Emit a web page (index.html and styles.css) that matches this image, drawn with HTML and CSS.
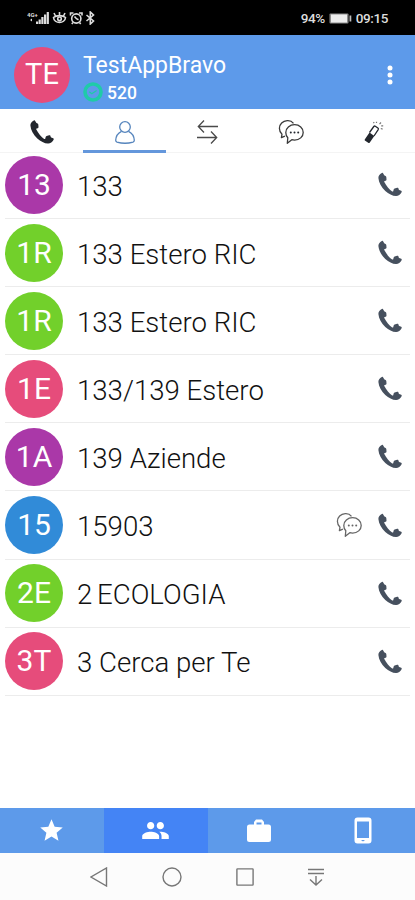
FILE: index.html
```html
<!DOCTYPE html>
<html lang="en">
<head>
  <meta charset="UTF-8" />
  <meta name="viewport" content="width=device-width, initial-scale=1.0"/>
  <title>Contacts</title>
  <link rel="stylesheet" href="styles.css">
</head>
<body>

  <!-- shared icons -->
  <svg class="sprite" width="0" height="0">
    <symbol id="phone" viewBox="0 0 24 24">
      <path d="M3.800.5C1.500 1.800.3 3.500.4 5.600c.4 4.600 2.900 9.200 6.900 12.800 3.300 3 7.200 4.900 10.600 5.200 2.300.1 4.600-1.500 5.700-3.900.3-.6.1-1.100-.4-1.400l-2-.8c-.4-.2-.6-.5-.6-1-.1-.9-.6-1.400-1.500-1.200l-2.500.7c-.6.2-.9.600-1 1.200l-.3 1.300c-.1.500-.6.7-1.100.4C11.300 17.200 8.300 13.500 6.300 9.600c-.2-.5-.1-.9.400-1l1-.3c.6-.2.9-.6.8-1.200l-.2-2.600c-.1-.7-.5-1.100-1.200-1.200-.5 0-.8-.3-1-.8L5.200.9C4.900.3 4.400.1 3.800.5z"/>
    </symbol>
    <symbol id="chat" viewBox="0 0 26 26">
      <g fill="none" stroke="currentColor" stroke-width="1.300" stroke-linejoin="round">
        <path d="M15.500 4.300C13.900 2.200 11.600 1.400 9.200 1.600 4.800 1.900 1.400 5.200 1.400 9.300c0 2.500 1 4.500 2.600 5.900L3.400 18.600l3.500-1.500"/>
        <path d="M16.600 5.700c4.900 0 8.600 3.400 8.600 7.700s-3.700 7.700-8.600 7.700c-1 0-1.900-.1-2.800-.4L9.300 24.300l.5-5.500C8.500 17.400 7.800 15.500 7.800 13.400c0-4.300 3.900-7.700 8.800-7.700z"/>
      </g>
      <circle cx="12.800" cy="13.500" r="1"/><circle cx="16.500" cy="13.500" r="1"/><circle cx="20.200" cy="13.500" r="1"/>
    </symbol>
  </svg>

  <div class="status">
    <svg class="status-icons" width="68" height="14" viewBox="0 0 68 14">
      <text x="0" y="5.500" class="net">4G+</text>
      <path d="M3 9l2-1.500v3zM9 10.500h2.100v2.500H9zM11.600 8.500h2.200v4.500h-2.200zM14.300 6h2.200v7h-2.200zM17 3.500h2.200V13H17zM19.700 1h2.200v12h-2.200z"/>
      <g fill="none" stroke="currentColor" stroke-width="1.600">
        <path d="M26.500 6.500c3-2.500 9-2.500 12 0-.5 6.500-11.500 6.500-12 0zM27 2l1.500 3M32.500 1v3.500M38 2l-1.500 3"/>
        <circle cx="32.500" cy="7.800" r="1.800"/>
        <circle cx="49.300" cy="7.500" r="4.600"/>
        <path d="M43.500 4.500v-2.500h3M55 4.500v-2.500h-3M47.500 5.500l2 2.200 2 1M46 11.500L44.800 13M52.500 11.500l1.200 1.500"/>
        <path d="M59.500 4l7 6-3.200 3V1l3.200 3-7 6"/>
      </g>
    </svg>
    <div class="status-right">
      <span class="battery-text">94%</span>
      <svg width="23" height="11" viewBox="0 0 23 11">
        <rect x=".5" y=".5" width="19" height="10" rx="1" fill="#8d8d8d"/>
        <rect x="2" y="1.500" width="16" height="8" fill="#ededed"/>
        <path d="M20.500 2.500h1.800v6h-1.800z" fill="#bbb"/>
      </svg>
      <span class="clock">09:15</span>
    </div>
  </div>

  <header class="header">
    <div class="avatar pink">TE</div>
    <div class="account">
      <div class="name">TestAppBravo</div>
      <div class="ext">
        <svg width="20" height="20" viewBox="0 0 20 20" fill="none" stroke="#1fcba8">
          <circle cx="10" cy="10" r="8" stroke-width="3.600"/>
          <path d="M6.200 9.800l2.600 2 4.800-3.300" stroke-width="1.300"/>
        </svg>
        <span>520</span>
      </div>
    </div>
    <svg class="more" width="6" height="20" viewBox="0 0 6 20">
      <circle cx="3" cy="3" r="2.500"/><circle cx="3" cy="10" r="2.500"/><circle cx="3" cy="17" r="2.500"/>
    </svg>
  </header>

  <nav class="tabs">
    <div class="tab"><svg class="dark" width="24" height="24"><use href="#phone"/></svg></div>
    <div class="tab active">
      <svg width="20" height="23" viewBox="0 0 20 23" fill="none" stroke="#5685bd" stroke-width="1.300">
        <circle cx="10" cy="6" r="5.300"/>
        <path d="M6.500 10.300C3 12 .9 15 .7 19.300c0 .9.500 1.500 1.300 1.800 4.800 1.400 11.200 1.400 16 0 .8-.3 1.300-.9 1.300-1.800-.2-4.300-2.300-7.300-5.800-9"/>
      </svg>
    </div>
    <div class="tab">
      <svg width="21" height="24" viewBox="0 0 21 24" fill="none" stroke="#4a4a4a" stroke-width="1.300">
        <path d="M21 6.500H1.500M7 .5L1.300 6.500 7 12.500M0 17.500h19.500M14 11.500l5.700 6L14 23.500"/>
      </svg>
    </div>
    <div class="tab"><svg class="dark" width="26" height="26"><use href="#chat"/></svg></div>
    <div class="tab">
      <svg class="wand" width="20" height="23" viewBox="0 0 20 23">
        <path d="M5.500 11.500L10.300 15l-4.500 6.500c-.4.600-1 .7-1.600.3L1.200 19.800c-.6-.4-.7-1-.3-1.600z" fill="#23272e"/>
        <path d="M5.500 11.500l4.300-6c.4-.5 1-.6 1.500-.3l2.600 1.900c.5.400.6 1 .3 1.500L10 15" fill="none" stroke="#23272e" stroke-width="1.300"/>
        <path d="M9.300 2l1-.7M12.500 2V.8M15.500 3.200l1.500-1.700M17.200 4.800h2M16.800 7.500l1.800.6" stroke="#777" stroke-width="1.200"/>
      </svg>
    </div>
  </nav>

  <main class="contacts">
    <div class="contact">
      <div class="avatar purple">13</div>
      <div class="label">133</div>
      <svg class="call" width="24" height="25"><use href="#phone"/></svg>
    </div>
    <div class="contact">
      <div class="avatar green">1R</div>
      <div class="label">133 Estero RIC</div>
      <svg class="call" width="24" height="25"><use href="#phone"/></svg>
    </div>
    <div class="contact">
      <div class="avatar green">1R</div>
      <div class="label">133 Estero RIC</div>
      <svg class="call" width="24" height="25"><use href="#phone"/></svg>
    </div>
    <div class="contact">
      <div class="avatar pink">1E</div>
      <div class="label">133/139 Estero</div>
      <svg class="call" width="24" height="25"><use href="#phone"/></svg>
    </div>
    <div class="contact">
      <div class="avatar purple">1A</div>
      <div class="label">139 Aziende</div>
      <svg class="call" width="24" height="25"><use href="#phone"/></svg>
    </div>
    <div class="contact">
      <div class="avatar blue">15</div>
      <div class="label">15903</div>
      <svg class="message" width="26" height="26"><use href="#chat"/></svg>
      <svg class="call" width="24" height="25"><use href="#phone"/></svg>
    </div>
    <div class="contact">
      <div class="avatar green">2E</div>
      <div class="label tight">2 ECOLOGIA</div>
      <svg class="call" width="24" height="25"><use href="#phone"/></svg>
    </div>
    <div class="contact">
      <div class="avatar pink">3T</div>
      <div class="label">3 Cerca per Te</div>
      <svg class="call" width="24" height="25"><use href="#phone"/></svg>
    </div>
  </main>

  <nav class="bottom">
    <div class="item">
      <svg width="27" height="27" viewBox="0 0 24 24"><path d="M12 17.270L18.180 21l-1.640-7.030L22 9.240l-7.190-.61L12 2 9.190 8.630 2 9.240l5.460 4.730L5.820 21z"/></svg>
    </div>
    <div class="item active">
      <svg width="29" height="29" viewBox="0 0 24 24"><path d="M16 11c1.660 0 2.990-1.340 2.990-3S17.660 5 16 5s-3 1.340-3 3 1.340 3 3 3zm-8 0c1.660 0 2.990-1.340 2.990-3S9.660 5 8 5 5 6.340 5 8s1.340 3 3 3zm0 2c-2.330 0-7 1.170-7 3.500V19h14v-2.500C15 14.170 10.330 13 8 13zm8 0c-.29 0-.62.020-.97.050 1.160.84 1.970 1.970 1.970 3.450V19h6v-2.500c0-2.330-4.670-3.500-7-3.500z"/></svg>
    </div>
    <div class="item">
      <svg width="26" height="26" viewBox="0 0 26 26"><path d="M3.500 6.500H8V4l2-2.500h6L18 4v2.500h4.500A2.500 2.500 0 0 1 25 9v12.500a2.500 2.500 0 0 1-2.500 2.500h-19A2.500 2.500 0 0 1 1 21.500V9a2.500 2.500 0 0 1 2.500-2.500zM10.500 4.500v2h5v-2z" fill-rule="evenodd"/></svg>
    </div>
    <div class="item">
      <svg width="18" height="27" viewBox="0 0 18 27"><path d="M3.500.5h11a3 3 0 0 1 3 3v20a3 3 0 0 1-3 3h-11a3 3 0 0 1-3-3v-20a3 3 0 0 1 3-3zM3 4.500v16.500h12V4.500zM7 23l1.500 1.300h1L11 23z" fill-rule="evenodd"/></svg>
    </div>
  </nav>

  <footer class="system">
    <svg width="18" height="20" viewBox="0 0 18 20"><path d="M16.500 1v18L1 10z"/></svg>
    <svg width="20" height="20" viewBox="0 0 20 20"><circle cx="10" cy="10" r="9"/></svg>
    <svg width="18" height="18" viewBox="0 0 18 18"><rect x=".9" y=".9" width="16.200" height="16.200" rx=".6"/></svg>
    <svg width="16" height="18" viewBox="0 0 16 18"><path d="M0 1.500h16M0 5.500h16M8 8v9M2 11.500l6 5.500 6-5.500"/></svg>
  </footer>

</body>
</html>
```
FILE: styles.css
```css
* {
  box-sizing: border-box;
}

body {
  margin: 0;
  height: 900px;
  display: flex;
  flex-direction: column;
  font-family: Roboto, 'Liberation Sans', sans-serif;
  background: #fff;
  overflow: hidden;
}

svg {
  display: block;
  flex: none;
}

.sprite {
  position: absolute;
}

.status {
  height: 35px;
  flex: none;
  display: flex;
  justify-content: space-between;
  align-items: center;
  padding: 1px 27px 0;
  background: #000;
  color: #ddd;
}

.status-icons {
  fill: currentColor;
}

.net {
  font-size: 6px;
  font-weight: bold;
}

.status-right {
  display: flex;
  align-items: center;
  gap: 4px;
  font-size: 13.5px;
  font-weight: 500;
}

.status-right span {
  letter-spacing: -0.4px;
}

.header {
  height: 74px;
  flex: none;
  display: flex;
  align-items: center;
  padding: 6px 22px 0 14px;
  background: #5d9aea;
  color: #fff;
}

.avatar {
  width: 58px;
  height: 58px;
  flex: none;
  border-radius: 50%;
  display: flex;
  align-items: center;
  justify-content: center;
  font-size: 30px;
  color: #fff;
}

.header .avatar {
  width: 56px;
  height: 56px;
  padding-bottom: 2px;
  font-size: 29px;
}

.pink {
  background: #e64c7b;
}

.purple {
  background: #aa38a8;
}

.green {
  background: #72d02b;
}

.blue {
  background: #318bd8;
}

.account {
  flex: 1;
  margin: 6px 0 0 13px;
}

.name {
  font-size: 23px;
  line-height: 27px;
}

.ext {
  display: flex;
  align-items: center;
  gap: 4px;
  height: 26px;
  font-size: 17.5px;
  font-weight: 500;
}

.ext span {
  padding-top: 2px;
}

.more {
  fill: #fff;
}

.tabs {
  height: 44px;
  flex: none;
  display: flex;
}

.tab {
  flex: 1;
  display: flex;
  align-items: center;
  justify-content: center;
  padding-top: 3px;
  border-bottom: 1px solid #f4f4f4;
}

.tab.active {
  padding-top: 5px;
  border-bottom: 3px solid #6497dc;
}

.dark {
  fill: #23272e;
  color: #3a3a3a;
}

.contacts {
  flex: 1;
  margin-top: -2px;
}

.contact {
  height: 68.1px;
  display: flex;
  align-items: center;
  margin: 0 5px;
  padding-right: 8px;
  border-bottom: 1px solid #ececec;
}

.contact .avatar {
  padding-bottom: 1px;
}

.label {
  flex: 1;
  margin: 3px 0 0 14px;
  font-size: 27.6px;
  font-weight: 300;
  color: #111;
}

.tight {
  word-spacing: -2px;
}

.call {
  fill: #46505e;
}

.message {
  margin-right: 16px;
  fill: #666;
  color: #666;
}

.bottom {
  height: 45px;
  flex: none;
  display: flex;
  background: #5d9aea;
}

.item {
  flex: 1;
  display: flex;
  align-items: center;
  justify-content: center;
  fill: #fff;
}

.item.active {
  background: #4484f5;
}

.system {
  height: 47px;
  flex: none;
  display: flex;
  align-items: center;
  gap: 54px;
  padding-left: 90px;
  background: #fcfcfc;
  fill: none;
  stroke: #777;
  stroke-width: 1.4;
}
```
